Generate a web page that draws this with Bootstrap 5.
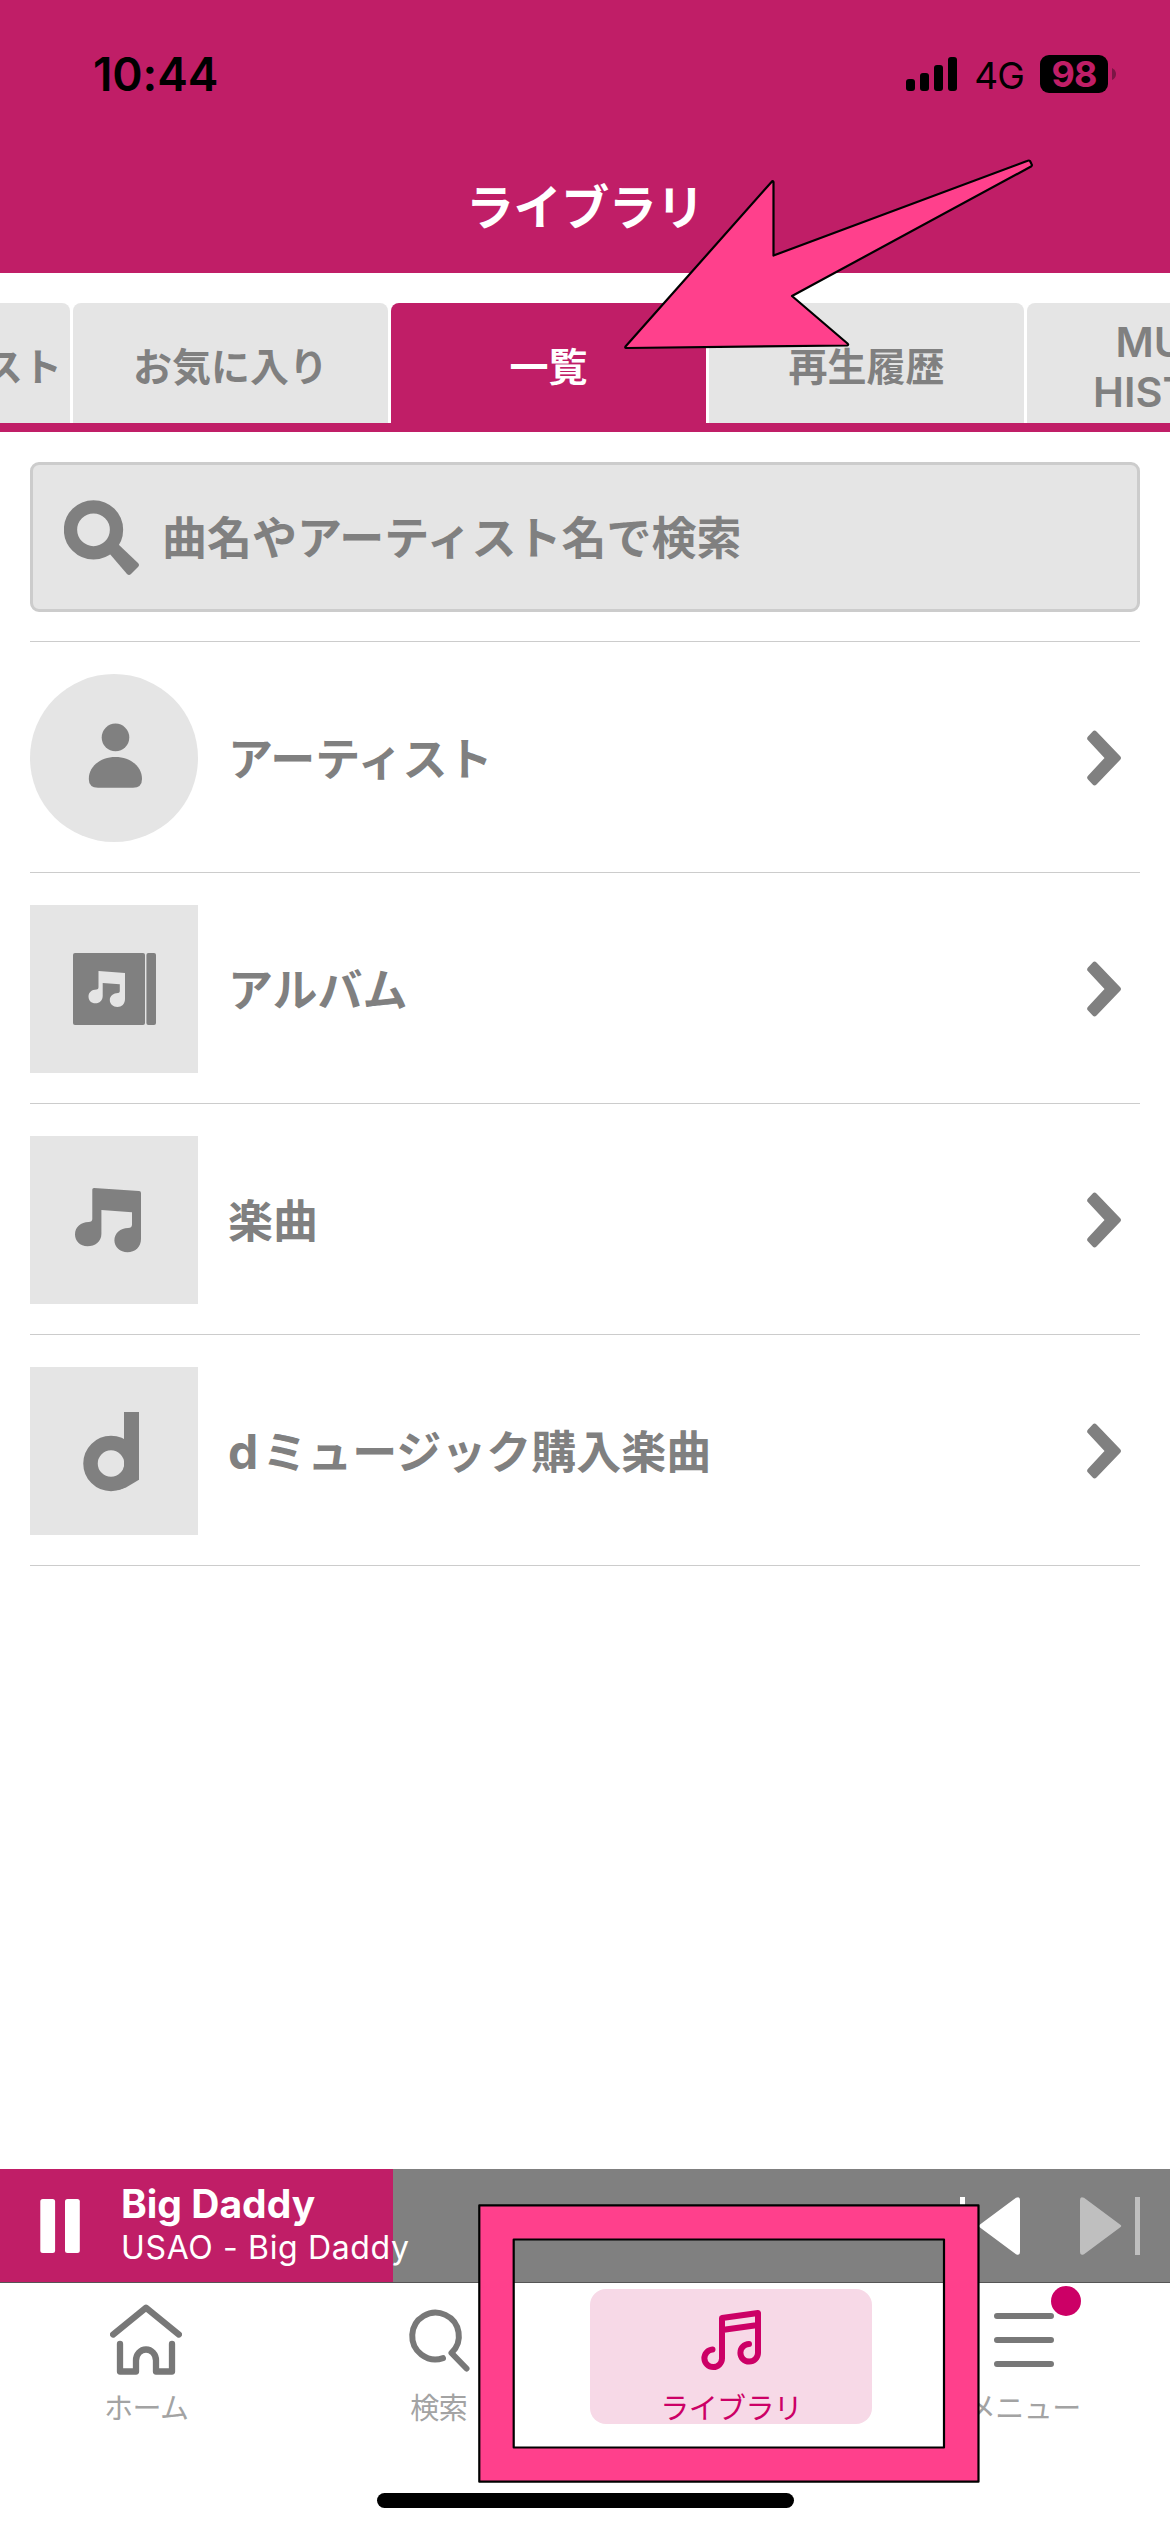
<!DOCTYPE html>
<html lang="ja">
<head>
<meta charset="utf-8">
<meta name="viewport" content="width=device-width, initial-scale=1">
<title>ライブラリ</title>
<link href="https://cdn.jsdelivr.net/npm/bootstrap@5.3.0/dist/css/bootstrap.min.css" rel="stylesheet">
<style>
:root { --brand: #c01e67; --ink: #808080; --tile: #e5e5e5; --accent: #cc0066; --marker: #ff408c; }
body { width: 1170px; height: 2532px; overflow: hidden; background: #fff; color: var(--ink); font-family: Inter, "Noto Sans CJK JP", sans-serif; }
svg { display: block; flex: none; }
.app-head { height: 273px; background: var(--brand); }
.status { height: 148px; padding: 0 54px 0 93px; color: #000; }
.clock { font-size: 46px; font-weight: 600; line-height: 1; letter-spacing: -.1px; }
.net { font-size: 37px; line-height: 1; font-weight: 400; margin: 2px 16px 0 16px; letter-spacing: -.9px; }
.batt { width: 68px; height: 38px; border-radius: 9px; background: #000; color: var(--brand); font-size: 36px; font-weight: 700; line-height: 38px; letter-spacing: -.8px; }
.page-title { font-size: 48px; font-weight: 700; line-height: 60px; letter-spacing: -.4px; margin-top: 30px; }
.tabs { height: 159px; padding-top: 30px; border-bottom: 9px solid var(--brand); overflow: hidden; }
.tab-strip { gap: 3px; margin-left: -245px; height: 120px; }
.tab-item { width: 315px; flex: none; border-radius: 8px 8px 0 0; background: var(--tile); font-size: 39px; font-weight: 700; line-height: 50px; padding-top: 7px; text-align: center; white-space: nowrap; }
.tab-item.on { background: var(--brand); color: #fff; }
.tab-item.latin { font-weight: 600; font-size: 41.5px; padding-top: 8px; }
.finder { height: 150px; margin: 30px 30px 29px; border: 3px solid #ccc; border-radius: 9px; background: var(--tile); padding-left: 31px; font-size: 45px; font-weight: 700; line-height: 60px; }
.finder span { margin: 3px 0 0 22px; }
.lib { margin: 0 30px; border-top: 1px solid #ccc; }
.lib-row { height: 231px; padding: 2px 19px 0 0; border-bottom: 1px solid #ccc; font-size: 45px; font-weight: 700; line-height: 60px; }
.lib-row span { padding-top: 3px; }
.dm { letter-spacing: 4px; font-size: 48px; line-height: 1; }
.tile { width: 168px; height: 168px; background: var(--tile); margin-right: 30px; flex: none; }
.player { height: 114px; background: #808080; border-bottom: 1px solid #555; color: #fff; margin-top: 603px; }
.played { height: 113px; background: var(--brand); padding-left: 40px; white-space: nowrap; }
.track-info { margin-left: 41px; }
.track { font-size: 39px; font-weight: 700; line-height: 44px; }
.artist { font-size: 32px; font-weight: 400; line-height: 44px; letter-spacing: .65px; }
.skips { gap: 60px; padding-right: 30px; }
.dock { height: 210px; }
.dock-item { flex: 1 1 0; padding-top: 20px; font-size: 29px; line-height: 36px; color: #a3a3a3; letter-spacing: -.6px; }
.dock-item svg { margin-bottom: 16px; }
.dock-on { width: 282px; height: 135px; margin-top: -14px; padding-top: 14px; border-radius: 16px; background: #f7d9e7; color: var(--accent); }
.handle { width: 417px; height: 15px; border-radius: 8px; background: #000; }
.over { left: 0; top: 0; pointer-events: none; }
</style>
<script src="https://cdn.jsdelivr.net/npm/bootstrap@5.3.0/dist/js/bootstrap.bundle.min.js"></script>
</head>
<body class="position-relative">
<header class="app-head">
  <div class="status d-flex align-items-center justify-content-between">
    <div class="clock">10:44</div>
    <div class="d-flex align-items-center">
      <svg width="52" height="34" viewBox="0 0 52 34"><rect y="22" width="9" height="12" rx="3"/><rect x="14" y="16" width="9" height="18" rx="3"/><rect x="28" y="8" width="9" height="26" rx="3"/><rect x="42" width="9" height="34" rx="3"/></svg>
      <div class="net">4G</div>
      <div class="batt text-center">98</div>
      <svg class="ms-1" width="4" height="12" viewBox="0 0 4 12"><path d="M0 0Q4 2 4 6T0 12Z" fill="#7b1545"/></svg>
    </div>
  </div>
  <h1 class="page-title text-white text-center mb-0">ライブラリ</h1>
</header>

<nav class="tabs">
  <div class="tab-strip d-flex">
    <div class="tab-item d-flex align-items-center justify-content-end pe-2"><span>マイプレイリスト</span></div>
    <div class="tab-item d-flex align-items-center justify-content-center">お気に入り</div>
    <div class="tab-item on d-flex align-items-center justify-content-center">一覧</div>
    <div class="tab-item d-flex align-items-center justify-content-center">再生履歴</div>
    <div class="tab-item latin d-flex align-items-center justify-content-center">MUSIC<br>HISTORY</div>
  </div>
</nav>

<main>
  <div class="finder d-flex align-items-center">
    <svg width="76" height="76" viewBox="0 0 76 76"><circle cx="29.500" cy="30.800" r="23" fill="none" stroke="#808080" stroke-width="13.300"/><path d="M54 45L74 64Q76 66 74 68L67 75Q65 77 63 75L45 54Z" fill="#808080"/></svg>
    <span>曲名やアーティスト名で検索</span>
  </div>

  <div class="lib">
    <div class="lib-row d-flex align-items-center">
      <div class="tile rounded-circle"><svg width="168" height="168" fill="#808080"><circle cx="85.5" cy="63.4" r="13.8"/><path d="M58.8 105C58.8 92 71 83 85.4 83S112 92 112 105Q112 113.700 103 113.700H68Q58.800 113.700 58.800 105Z"/></svg></div>
      <span class="flex-grow-1">アーティスト</span>
      <svg width="34" height="56" viewBox="0 0 34 56"><path d="M9.500 1.500L33 26Q35 28 33 30L9.500 54.500Q7.500 56.300 5.700 54.500L1 49.600Q-.8 47.600 1 45.700L17.500 28L1 10.300Q-.8 8.400 1 6.400L5.700 1.500Q7.500-.3 9.500 1.500Z" fill="#808080"/></svg>
    </div>
    <div class="lib-row d-flex align-items-center">
      <div class="tile"><svg width="168" height="168" fill="#808080"><rect x="43" y="48" width="72" height="72" rx="2"/><rect x="116.400" y="48" width="9.600" height="72" rx="2"/><path fill="#e5e5e5" d="M68.500 66L95 68V94C95 99 91.600 102 87.400 102S79.800 99 79.800 95C79.800 91 83.500 88 88 88C89.500 88 89.800 87 89.800 85.500V79.300L72.700 78V91C72.700 95.500 69.500 98.300 65.400 98.300S58.500 95.500 58.500 91.500C58.500 87 62 84.500 66.500 84.400C68 84.400 68.500 83.500 68.500 82Z"/></svg></div>
      <span class="flex-grow-1">アルバム</span>
      <svg width="34" height="56" viewBox="0 0 34 56"><path d="M9.500 1.500L33 26Q35 28 33 30L9.500 54.500Q7.500 56.300 5.700 54.500L1 49.600Q-.8 47.600 1 45.700L17.500 28L1 10.300Q-.8 8.400 1 6.400L5.700 1.500Q7.500-.3 9.500 1.500Z" fill="#808080"/></svg>
    </div>
    <div class="lib-row d-flex align-items-center">
      <div class="tile"><svg width="168" height="168" fill="#808080"><path d="M62.300 53.500Q62.300 52 64 52L109 54.900Q111 55 111 57V103C111 111 105 116.300 97.500 116.300S84.400 111 84.400 104.500C84.400 97 90.500 92 98 92Q102 92 102 88.500V76.300L71.400 74V98C71.400 105.500 65 110.300 57.500 110.300S45 105 45 98.500C45 91 51 86.100 58.500 86.100Q62.300 86 62.300 83Z"/></svg></div>
      <span class="flex-grow-1">楽曲</span>
      <svg width="34" height="56" viewBox="0 0 34 56"><path d="M9.500 1.500L33 26Q35 28 33 30L9.500 54.500Q7.500 56.300 5.700 54.500L1 49.600Q-.8 47.600 1 45.700L17.500 28L1 10.300Q-.8 8.400 1 6.400L5.700 1.500Q7.500-.3 9.500 1.500Z" fill="#808080"/></svg>
    </div>
    <div class="lib-row d-flex align-items-center">
      <div class="tile"><svg width="168" height="168"><circle cx="81" cy="96.500" r="20.500" fill="none" stroke="#808080" stroke-width="14.500"/><rect x="94" y="45" width="15" height="67.500" fill="#808080"/><polygon points="94,100 109,100 109,112.700 96,120.500 88,123.300" fill="#808080"/></svg></div>
      <span class="flex-grow-1"><span class="dm">d</span>ミュージック購入楽曲</span>
      <svg width="34" height="56" viewBox="0 0 34 56"><path d="M9.500 1.500L33 26Q35 28 33 30L9.500 54.500Q7.500 56.300 5.700 54.500L1 49.600Q-.8 47.600 1 45.700L17.500 28L1 10.300Q-.8 8.400 1 6.400L5.700 1.500Q7.500-.3 9.500 1.500Z" fill="#808080"/></svg>
    </div>
  </div>
</main>

<section class="player d-flex justify-content-between">
  <div class="played d-flex align-items-center" style="width:393px">
    <svg width="40" height="54" fill="#fff"><rect x=".3" width="14.800" height="54" rx="2.500"/><rect x="25" width="14.800" height="54" rx="2.500"/></svg>
    <div class="track-info"><div class="track">Big Daddy</div><div class="artist">USAO - Big Daddy</div></div>
  </div>
  <div class="skips d-flex align-items-center">
    <svg width="60" height="58" fill="#fff"><rect width="5" height="58"/><path d="M20 27.500L56 .8Q60-1 60 3V55Q60 59 56 57.200L20 30.500Q17.500 29 20 27.500Z"/></svg>
    <svg width="60" height="58" fill="#bfbfbf"><rect x="55" width="5" height="58"/><path d="M40 27.500L4 .8Q0-1 0 3V55Q0 59 4 57.200L40 30.500Q42.500 29 40 27.500Z"/></svg>
  </div>
</section>

<nav class="dock d-flex">
  <div class="dock-item d-flex flex-column align-items-center">
    <svg width="72" height="72" fill="none" stroke="#787878" stroke-width="6.300" stroke-linecap="round" stroke-linejoin="round"><path d="M3.200 31.500L36 4.700L68.800 31.500M10 41V68.500H26V57.500A10 11 0 0 1 46 57.500V68.500H62V41"/></svg>
    ホーム</div>
  <div class="dock-item d-flex flex-column align-items-center">
    <svg width="72" height="72" fill="none" stroke="#787878" stroke-width="6" stroke-linecap="round" stroke-linejoin="round"><path d="M40 55.100A23.300 23.300 0 1 1 48.500 50L63.500 65.500"/></svg>
    検索</div>
  <div class="dock-item d-flex flex-column align-items-center">
    <div class="dock-on d-flex flex-column align-items-center">
      <svg width="72" height="72" fill="none" stroke="#cc0066" stroke-width="6" stroke-linecap="round" stroke-linejoin="round"><path d="M17.500 46.500A8.800 8.800 0 1 0 27 55.500V15L63 10V50A8.800 8.800 0 1 1 54 41M27 27L63 22"/></svg>
      ライブラリ</div>
  </div>
  <div class="dock-item d-flex flex-column align-items-center">
    <svg width="72" height="72" stroke="#787878" stroke-width="6" stroke-linecap="round"><path d="M9 13H63M9 37H63M9 61H63"/></svg>
    メニュー
  </div>
</nav>
<div class="d-flex justify-content-center"><div class="handle"></div></div>

<!-- unread badge and annotation markers -->
<svg class="over position-absolute" width="1170" height="2532" viewBox="0 0 1170 2532">
  <circle cx="1066" cy="2301" r="15" fill="#cc0066"/>
  <g fill="#ff408c" stroke="#000" stroke-width="2.200" stroke-linejoin="round">
    <path d="M625.500 346.500Q624.500 348 627 348L847 345.500Q849 345 847.500 343.500L792 296L1031 166.500Q1032.500 165.500 1031.500 164L1030 161Q1029 160 1027 161L773.500 255.500V182Q773 180 771.500 182Z"/>
    <path fill-rule="evenodd" d="M479.300 2205.300H978.500V2481.700H479.300ZM513.700 2239.500V2447.500H944V2239.500Z"/>
  </g>
</svg>
</body>
</html>
